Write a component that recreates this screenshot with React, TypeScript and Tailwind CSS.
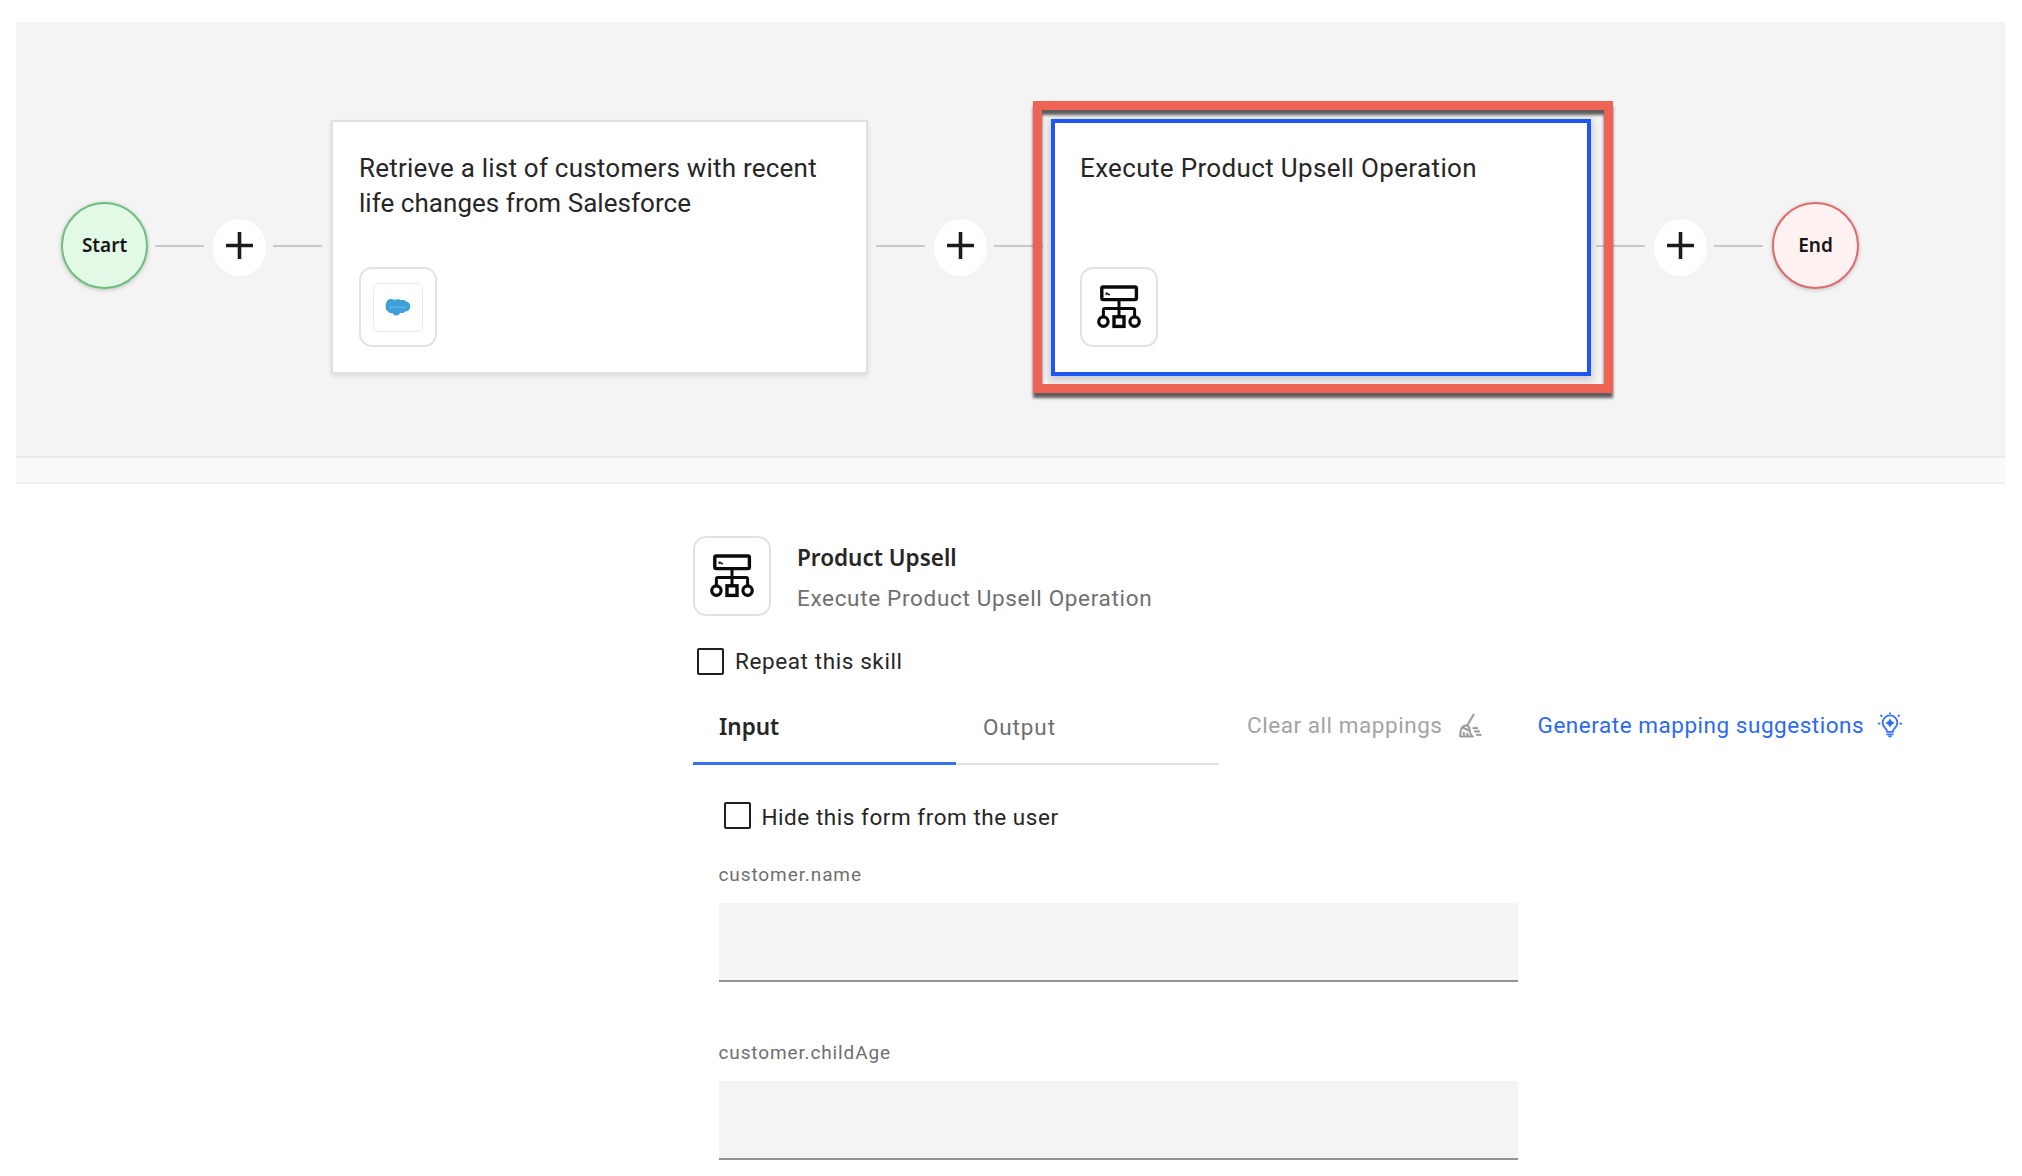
import React from "react";

function PlusNode() {
  return (
    <div className="mt-[197px] flex h-[57px] w-[53px] shrink-0 justify-center rounded-[50%] bg-white pt-[13px]">
      <svg width="27" height="27" viewBox="0 0 27 27">
        <path d="M13.5 0V27M0 13.5H27" stroke="#1c1c1c" strokeWidth="3.6" fill="none" />
      </svg>
    </div>
  );
}

function Connector() {
  return (
    <div className="flex shrink-0">
      <div className="mr-[9px] mt-[223px] h-0.5 w-[49px] bg-[#c9c9c9]" />
      <PlusNode />
      <div className="ml-[7px] mt-[223px] h-0.5 w-[49px] bg-[#c9c9c9]" />
    </div>
  );
}

function NetworkIcon() {
  return (
    <svg width="46" height="46" viewBox="-0.8 0 46 46" fill="none" stroke="#0a0a0a">
      <rect x="5" y="3" width="34.6" height="12.6" rx="1.6" strokeWidth="3.4" />
      <path d="M8.8 11.2V8.4h1.8l1.2 1.4h1.4v1.4h-2.4v-1Z" fill="#0a0a0a" stroke="none" />
      <path d="M22.2 16V32M6.6 33V26Q6.6 24.4 8.2 24.4H36.2Q37.8 24.4 37.8 26V33" strokeWidth="3" />
      <circle cx="6.6" cy="37.6" r="4.7" strokeWidth="3.2" fill="#fff" />
      <circle cx="37.8" cy="37.6" r="4.7" strokeWidth="3.2" fill="#fff" />
      <rect x="17.2" y="32.8" width="10" height="9.6" strokeWidth="3.4" fill="#fff" />
    </svg>
  );
}

function CloudLogo() {
  return (
    <svg width="26" height="19" viewBox="0 0 26 19">
      <path
        d="M1.4 4.4C1.8 1.6 5 .4 7.6 1.3C9.2 1.9 10 2 11 1.6C13 .7 15 1.2 16 2.3C18 1.5 20.3 2 21.4 3.5C24 4 25.6 6.2 25.2 9C24.9 12 22.6 13.7 20 13.5C18.7 15 17 15.2 15.3 14.8C14.4 16.9 12.3 18 10.3 17.4C8.7 17 8 16 7.3 15.1C5 15.3 3.4 14.6 2.8 13.2C1 12.2 .5 10.5 .8 8.8C.4 7.2 .7 5.5 1.4 4.4Z"
        fill="#3f9fdb"
      />
      <path d="M4.5 9.2H21" stroke="#62b2e3" strokeWidth="2" strokeDasharray="2.5 .6" />
    </svg>
  );
}

function CleanIcon() {
  return (
    <svg width="27" height="27" viewBox="0 0 32 32" fill="#999999" stroke="#999999" strokeWidth="0.4">
      <path d="M20 18H26V20H20zM24 26H30V28H24zM22 22H28V24H22z" />
      <path d="M17.0029,20a4.8952,4.8952,0,0,0-2.4044-4.1729L22,3,20.2691,2,12.6933,15.126A5.6988,5.6988,0,0,0,7.45,16.6289C3.7064,20.24,3.9963,28.6821,4.01,29.04a1,1,0,0,0,1,.96H20.0012a1,1,0,0,0,.6-1.8C17.0615,25.5439,17.0029,20.0537,17.0029,20ZM11.93,16.9971A3.11,3.11,0,0,1,15.0041,20c0,.0381.0019.208.0168.4688L9.1215,17.8452A3.8,3.8,0,0,1,11.93,16.9971ZM15.4494,28A5.2,5.2,0,0,1,14,25H12a6.4993,6.4993,0,0,0,.9684,3H10.7451A16.6166,16.6166,0,0,1,10,24H8a17.3424,17.3424,0,0,0,.6652,4H6c.031-1.8364.29-5.8921,1.8027-8.5527l7.533,3.35A13.0253,13.0253,0,0,0,17.5968,28Z" />
    </svg>
  );
}

function BulbIcon() {
  return (
    <svg width="26" height="26" viewBox="0 0 26 26" fill="none" stroke="#3a74f2" strokeWidth="1.8">
      <path d="M10 19.8L9.7 18C7.5 15.5 5.6 13.8 5.6 10.8A7.4 7.4 0 0 1 20.4 10.8C20.4 13.8 18.5 15.5 16.3 18L16 19.8Z" />
      <path d="M9.5 22.3H16.5M11.3 24.4H14.7M13 .4V2.2M3.4 3L5.2 4.6M22.6 3L20.8 4.6M.8 11.6H3.4M22.6 11.6H25.2" />
      <path d="M13 6.4L14.7 9.3L17.6 11L14.7 12.7L13 15.6L11.3 12.7L8.4 11L11.3 9.3Z" fill="#2b69f1" stroke="none" />
    </svg>
  );
}

function Tile({ children }: { children: React.ReactNode }) {
  return (
    <div className="flex h-[80px] w-[78px] shrink-0 items-center justify-center rounded-[13px] border-2 border-[#e2e2e2] bg-white">
      {children}
    </div>
  );
}

function Checkbox() {
  return <span className="h-[27px] w-[27px] shrink-0 rounded-[2px] border-2 border-[#1f1f1f]" />;
}

function Field({ label, tracking }: { label: string; tracking: string }) {
  return (
    <div className="h-[177.5px]">
      <div className={"h-[42px] pt-0.5 text-[19px] leading-6 text-[#6f6f6f] " + tracking}>{label}</div>
      <div className="h-[79px] w-[799px] border-b-2 border-[#949494] bg-[#f4f4f4]" />
    </div>
  );
}

export default function App() {
  return (
    <div className="h-[1176px] w-[2022px] overflow-hidden whitespace-nowrap bg-white pl-4 pt-[22px] font-['Roboto',sans-serif] text-[#262626]">
      <section className="flex h-[436px] w-[1989px] items-start border-b-2 border-[#e8e8e8] bg-[#f4f4f4] pl-[45px]">
        <div className="mt-[180px] flex h-[87px] w-[87px] shrink-0 items-center justify-center rounded-full border-2 border-[#6cc07c] bg-[#e2f9e6] font-['Noto_Sans',sans-serif] text-[19px] font-semibold text-[#161616] shadow-[0_1px_4px_rgba(0,0,0,0.22)]">
          Start
        </div>
        <div className="ml-[7px] mr-[9px]">
          <Connector />
        </div>

        <div className="mt-[98px] flex h-[254px] w-[537px] shrink-0 flex-col justify-between border-2 border-[#e0e0e0] bg-white pb-[25px] pl-[26px] pt-[29px] shadow-[0_2px_4px_rgba(0,0,0,0.10)]">
          <div className="text-[26px] leading-[34.5px]">
            <div className="tracking-[0.22px]">Retrieve a list of customers with recent</div>
            <div className="tracking-[0.04px]">life changes from Salesforce</div>
          </div>
          <Tile>
            <div className="flex h-[49px] w-[50px] items-center justify-center rounded-[6px] border-[1.5px] border-[#e9e9e9]">
              <CloudLogo />
            </div>
          </Tile>
        </div>
        <div className="ml-2 mr-[8px]">
          <Connector />
        </div>

        <div className="relative mt-[97px] flex h-[257px] w-[540px] shrink-0 flex-col justify-between border-4 border-[#1d58f6] bg-white pb-[25px] pl-[25px] pt-[28px] shadow-[0_3px_8px_2px_rgba(0,0,0,0.16)]">
          <div className="text-[26px] leading-[34.5px] tracking-[0.35px]">Execute Product Upsell Operation</div>
          <Tile>
            <NetworkIcon />
          </Tile>
          <div className="absolute -left-[22px] -top-[22px] h-[292px] w-[580px] border-[9px] border-[#ed6454] drop-shadow-[0_5px_1.5px_rgba(0,0,0,0.62)]" />
        </div>
        <div className="ml-[5px] mr-[9px]">
          <Connector />
        </div>

        <div className="mt-[180px] flex h-[87px] w-[87px] shrink-0 items-center justify-center rounded-full border-2 border-[#e0696c] bg-[#fdf1f1] font-['Noto_Sans',sans-serif] text-[19px] font-semibold text-[#161616] shadow-[0_1px_4px_rgba(0,0,0,0.22)]">
          End
        </div>
      </section>
      <div className="h-[26px] w-[1989px] border-b-2 border-[#f0f0f0] bg-[#fafafa]" />

      <main className="ml-[677px] mt-[52px] w-[1300px]">
        <header className="flex gap-[26px]">
          <Tile>
            <NetworkIcon />
          </Tile>
          <div className="pt-[7px] text-[22.5px] leading-[30px]">
            <div className="font-['Noto_Sans',sans-serif] font-semibold">Product Upsell</div>
            <div className="mt-[10px] tracking-[0.67px] text-[#6f6f6f]">Execute Product Upsell Operation</div>
          </div>
        </header>

        <label className="ml-[4px] mt-[30px] flex items-center gap-[11px] text-[22.5px] leading-[30px]">
          <Checkbox />
          <span className="tracking-[0.6px]">Repeat this skill</span>
        </label>

        <div className="mt-[34px] flex text-[22.5px] leading-[30px]">
          <div className="h-[55px] w-[263px] border-b-[3px] border-[#3571ee] pl-[26px] pt-[2px] font-['Noto_Sans',sans-serif] font-semibold">Input</div>
          <div className="h-[55px] w-[263px] border-b-2 border-[#e0e0e0] pl-[27px] pt-[2px] tracking-[0.87px] text-[#6f6f6f]">Output</div>
          <div className="ml-[28px] flex h-[30px] items-center gap-[13px] tracking-[0.55px] text-[#a3a3a3]">
            <span>Clear all mappings</span>
            <CleanIcon />
          </div>
          <div className="ml-[55px] flex h-[30px] items-center gap-[13px] tracking-[0.53px] text-[#2b69f1]">
            <span>Generate mapping suggestions</span>
            <BulbIcon />
          </div>
        </div>

        <div className="ml-[25.5px]">
          <label className="mt-[34px] flex items-center gap-[11px] pl-[5px] text-[22.5px] leading-[30px]">
            <Checkbox />
            <span className="pt-[3px] tracking-[0.54px]">Hide this form from the user</span>
          </label>
          <div className="mt-[29px]">
            <Field label="customer.name" tracking="tracking-[0.9px]" />
            <Field label="customer.childAge" tracking="tracking-[0.87px]" />
          </div>
        </div>
      </main>
    </div>
  );
}
